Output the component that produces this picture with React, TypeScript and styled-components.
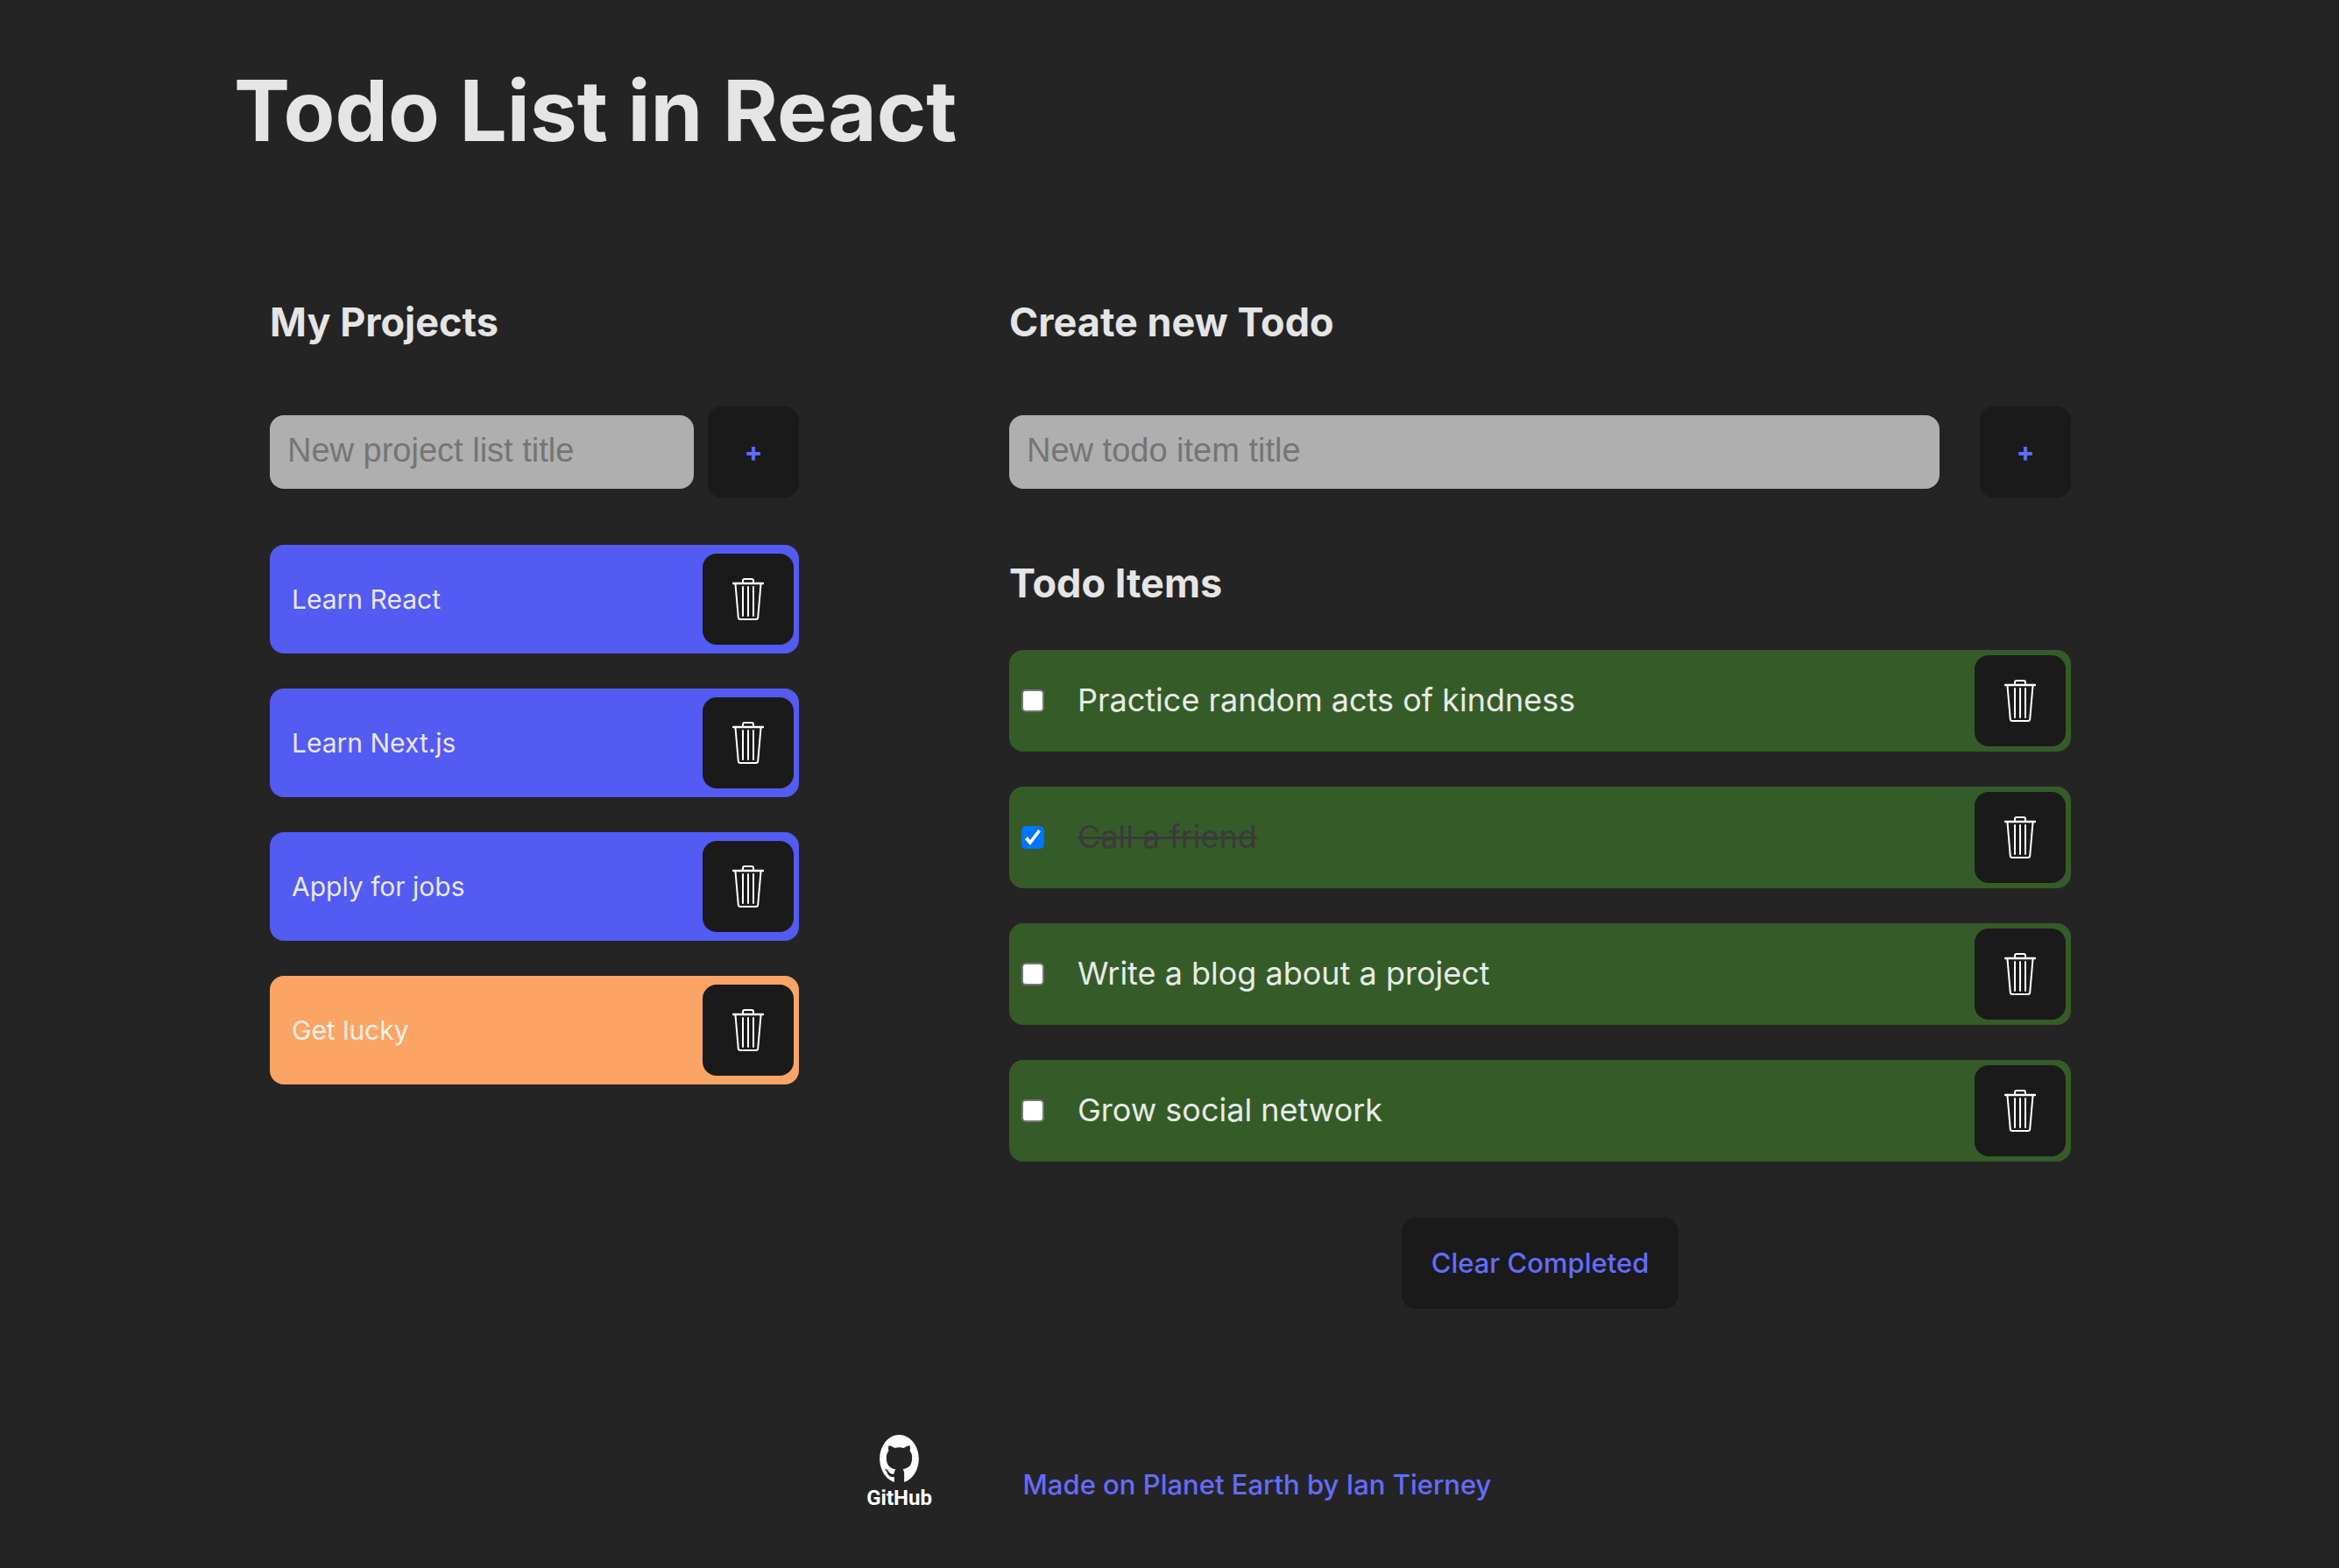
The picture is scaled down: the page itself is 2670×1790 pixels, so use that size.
import React, { useState } from "react";
import styled, { createGlobalStyle } from "styled-components";

const GlobalStyle = createGlobalStyle`
  * { box-sizing: border-box; }
  html { background: #242424; }
  body {
    margin: 0;
    background: #242424;
    color: #e5e5e5;
    font-family: Inter, "Liberation Sans", sans-serif;
    font-size: 32px;
    line-height: 48px;
  }
`;

const Page = styled.div`
  padding: 64px 10% 32px;
`;

const Title = styled.h1`
  margin: 0;
  font-size: 96px;
  line-height: 124px;
  font-weight: 700;
`;

const Columns = styled.div`
  display: grid;
  grid-template-columns: 604px minmax(0, 1fr);
  column-gap: 240px;
  padding: 144px 39px 0 41px;
`;

const Column = styled.section`
  display: flex;
  flex-direction: column;
`;

const Heading = styled.h2`
  margin: 0;
  font-size: 45px;
  line-height: 72px;
  font-weight: 700;
`;

const AddForm = styled.form<{ $gap: number }>`
  display: flex;
  align-items: center;
  gap: ${(p) => p.$gap}px;
  margin: 60px 0 0;
`;

const TitleInput = styled.input`
  flex: 1;
  min-width: 0;
  height: 84px;
  padding: 0 20px 4px;
  border: 0;
  border-radius: 16px;
  background: #afafaf;
  color: #242424;
  font: 38px "Liberation Sans", Arial, sans-serif;
  &::placeholder { color: #757575; }
`;

const Button = styled.button`
  display: flex;
  align-items: center;
  justify-content: center;
  flex: none;
  min-width: 104px;
  height: 104px;
  padding: 0 34px;
  border: 0;
  border-radius: 16px;
  background: #1a1a1a;
  color: #646cff;
  font: 500 31px/48px Inter, "Liberation Sans", sans-serif;
  cursor: pointer;
`;

const AddButton = styled(Button)`
  font-weight: 700;
`;

const List = styled.ul`
  display: flex;
  flex-direction: column;
  gap: 40px;
  margin: 0;
  padding: 0;
  list-style: none;
`;

const ProjectList = styled(List)`
  margin-top: 54px;
`;

const TodoSection = styled.div`
  display: flex;
  flex-direction: column;
  gap: 40px;
  margin-top: 62px;
`;

const Project = styled.li<{ $active: boolean }>`
  display: flex;
  align-items: center;
  justify-content: space-between;
  padding: 10px 6px 10px 25px;
  border-radius: 16px;
  background: ${(p) => (p.$active ? "#faa565" : "#535bf2")};
  color: ${(p) => (p.$active ? "#fef0e6" : "#eae8fd")};
  font-size: 30px;
`;

const Todo = styled.li`
  display: flex;
  align-items: center;
  padding: 6px 6px 6px 14px;
  border-radius: 16px;
  background: #355c28;
`;

const Tick = styled.input`
  appearance: none;
  flex: none;
  width: 26px;
  height: 26px;
  margin: 0 38px 0 0;
  border: 2px solid #767676;
  border-radius: 5px;
  background: #fff;
  &:checked {
    border: 0;
    background: #0075ff;
  }
  &:checked::before {
    content: "";
    display: block;
    width: 26px;
    height: 26px;
    background: #fff;
    clip-path: polygon(4px 15px, 7px 12px, 10px 16px, 19px 4px, 22px 6px, 10px 22px);
  }
`;

const TodoLabel = styled.label<{ $done: boolean }>`
  flex: 1;
  padding-bottom: 2px;
  font-size: 36px;
  color: ${(p) => (p.$done ? "#3c393b" : "#e8ebe7")};
  text-decoration: ${(p) => (p.$done ? "line-through" : "none")};
`;

const ClearButton = styled(Button)`
  align-self: center;
  margin-top: 64px;
`;

const Footer = styled.footer`
  display: flex;
  align-items: center;
  justify-content: center;
  gap: 82px;
  padding-top: 142px;
`;

const FooterLink = styled.a`
  color: #646cff;
  font-size: 31px;
  font-weight: 500;
  text-decoration: none;
`;

const Brand = styled.a`
  display: flex;
  flex-direction: column;
  align-items: center;
  gap: 2px;
  width: 118px;
  height: 118px;
  padding-top: 2px;
  color: #fff;
  font: 700 24px/32px Roboto, "Liberation Sans", sans-serif;
  text-decoration: none;
`;

const TrashIcon = () => (
  <svg width="36" height="48" viewBox="0 0 36 48" fill="none" stroke="#fff" strokeWidth="2" aria-hidden="true">
    <path d="M1 6h34" strokeWidth="2.4" strokeLinecap="round" />
    <path d="M12 5V3q0-2 2-2h8q2 0 2 2v2" />
    <path d="M3.500 7l3.300 38q.2 2 2.200 2h18q2 0 2.200-2l3.300-38" />
    <path d="M12 10v33M18 10v33M24 10v33" strokeLinecap="round" />
  </svg>
);

const GithubMark = () => (
  <svg width="45" height="54" viewBox="0 0 134 162" fill="#fff" aria-hidden="true">
    <path d="M50 162C21 153 0 120 0 82C0 37 30 0 67 0S134 37 134 82C134 120 113 153 84 162V134C84 126 82 121 79 118C98 115 111 105 111 78C111 68 108 61 103 55C105 50 105 43 103 37C96 37 89 41 83 45C73 42 61 42 51 45C45 41 38 37 31 37C29 43 29 50 31 55C26 61 23 68 23 78C23 105 36 115 55 118C52 121 50 126 50 133C40 136 34 133 29 124C26 118 21 116 18 117C18 119 22 122 25 128C29 140 38 146 50 144Z" />
  </svg>
);

const projects = ["Learn React", "Learn Next.js", "Apply for jobs", "Get lucky"];
const initialTodos = [
  { id: 1, title: "Practice random acts of kindness", done: false },
  { id: 2, title: "Call a friend", done: true },
  { id: 3, title: "Write a blog about a project", done: false },
  { id: 4, title: "Grow social network", done: false },
];

export default function App() {
  const [todos, setTodos] = useState(initialTodos);
  const toggle = (id: number) =>
    setTodos(todos.map((t) => (t.id === id ? { ...t, done: !t.done } : t)));

  return (
    <>
      <GlobalStyle />
      <Page>
        <Title>Todo List in React</Title>
        <Columns>
          <Column>
            <Heading>My Projects</Heading>
            <AddForm $gap={16} onSubmit={(e) => e.preventDefault()}>
              <TitleInput aria-label="New project list title" placeholder="New project list title" />
              <AddButton>+</AddButton>
            </AddForm>
            <ProjectList>
              {projects.map((name) => (
                <Project key={name} $active={name === "Get lucky"}>
                  {name}
                  <Button aria-label={`Delete ${name}`}><TrashIcon /></Button>
                </Project>
              ))}
            </ProjectList>
          </Column>
          <Column>
            <Heading>Create new Todo</Heading>
            <AddForm $gap={46} onSubmit={(e) => e.preventDefault()}>
              <TitleInput aria-label="New todo item title" placeholder="New todo item title" />
              <AddButton>+</AddButton>
            </AddForm>
            <TodoSection>
              <Heading>Todo Items</Heading>
              <List>
                {todos.map((t) => (
                  <Todo key={t.id}>
                    <Tick type="checkbox" id={`todo-${t.id}`} checked={t.done} onChange={() => toggle(t.id)} />
                    <TodoLabel htmlFor={`todo-${t.id}`} $done={t.done}>{t.title}</TodoLabel>
                    <Button aria-label={`Delete ${t.title}`}><TrashIcon /></Button>
                  </Todo>
                ))}
              </List>
            </TodoSection>
            <ClearButton onClick={() => setTodos(todos.filter((t) => !t.done))}>Clear Completed</ClearButton>
          </Column>
        </Columns>
        <Footer>
          <Brand href="#github"><GithubMark />GitHub</Brand>
          <FooterLink href="#author">Made on Planet Earth by Ian Tierney</FooterLink>
        </Footer>
      </Page>
    </>
  );
}
